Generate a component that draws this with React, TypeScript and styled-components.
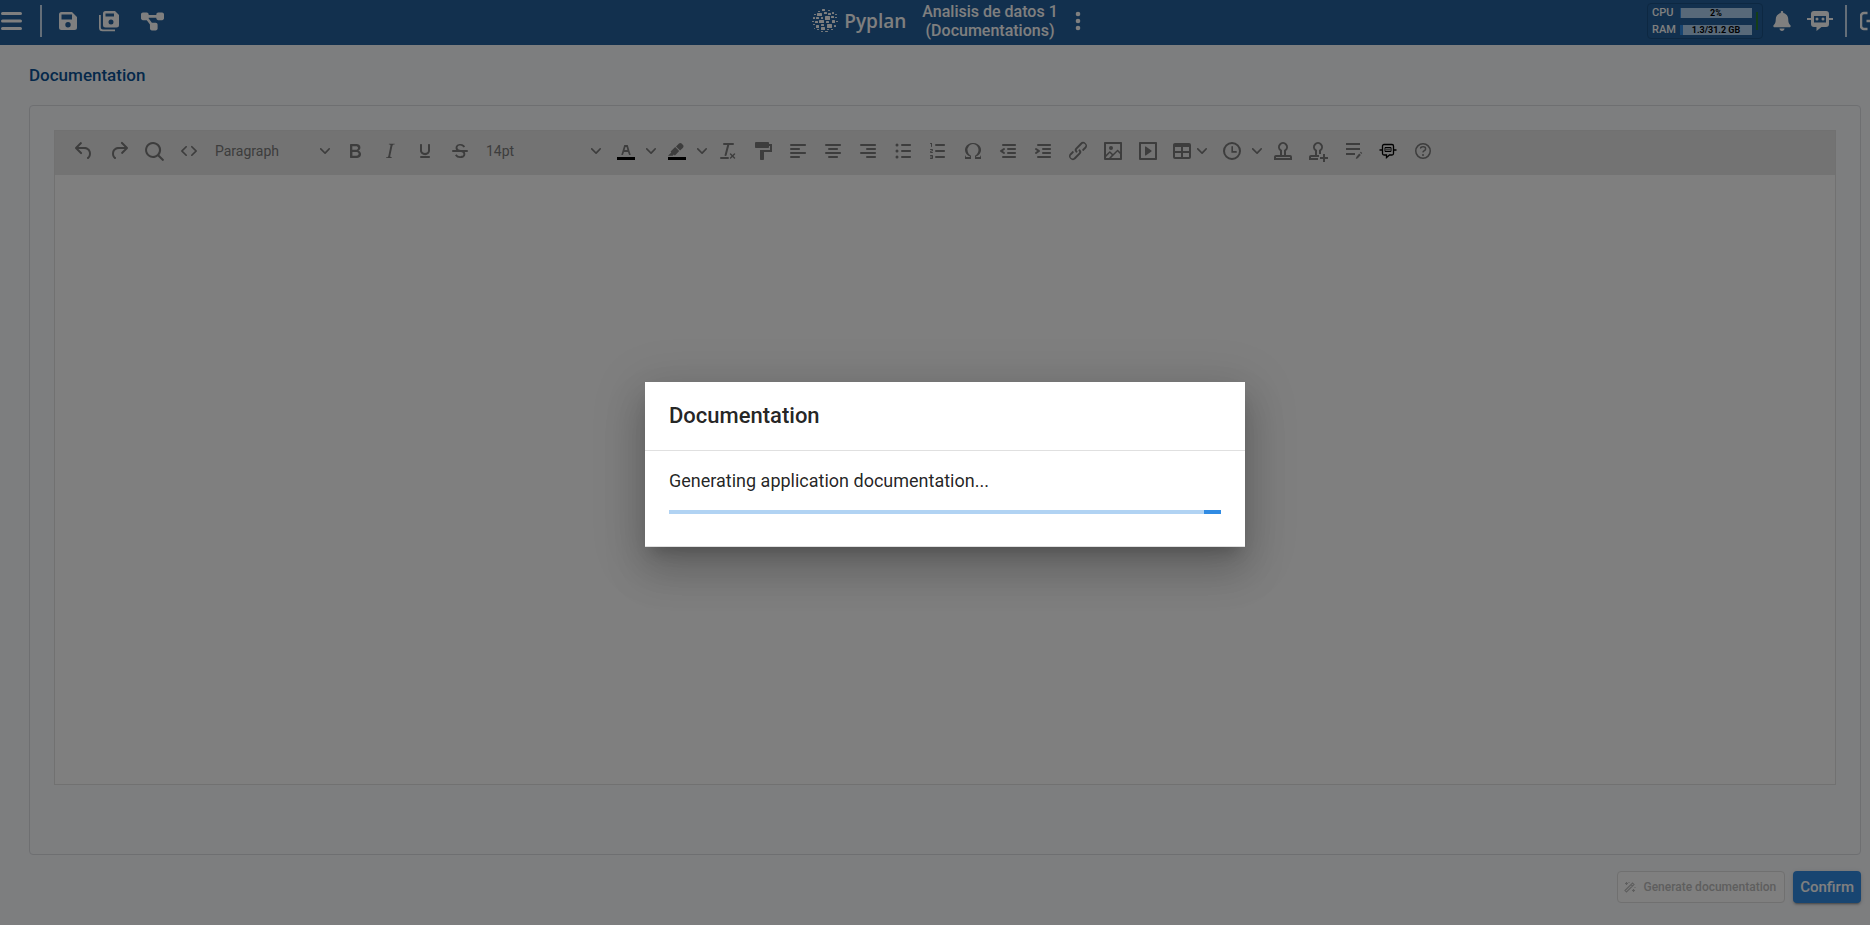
import React from 'react';
import styled, { createGlobalStyle } from 'styled-components';
import { FaBell } from 'react-icons/fa';
import { FaDiagramProject } from 'react-icons/fa6';

const GlobalStyle = createGlobalStyle`
  *, *::before, *::after { box-sizing: border-box; }
  html, body { margin: 0; overflow: hidden; }
  body { font-family: Roboto, "Liberation Sans", sans-serif; background: #fafcff; }
  button, select { font: inherit; color: inherit; margin: 0; padding: 0; border: 0; background: none; }
`;

/* The shell runs slightly past the window on the right and bottom. */
const Shell = styled.div`
  position: relative;
  display: flex;
  flex-direction: column;
  width: calc(100vw + 20px);
  min-height: calc(100vh + 4px);
  background: #fafcff;
`;

/* ---------- Header ---------- */

const Header = styled.header`
  display: grid;
  grid-template-columns: 1fr auto 1fr;
  align-items: center;
  height: 45px;
  padding-bottom: 3px;
  background: #24609c;
  color: #fff;
`;

const HeaderGroup = styled.div<{ $end?: boolean }>`
  display: flex;
  align-items: center;
  justify-content: ${p => (p.$end ? 'flex-end' : 'flex-start')};
`;

const HeaderButton = styled.button<{ $width?: number }>`
  display: flex;
  align-items: center;
  justify-content: center;
  width: ${p => p.$width ?? 42}px;
  height: 32px;
  flex: none;
  svg { display: block; }
`;

const HeaderRule = styled.span<{ $left: number; $right: number }>`
  width: 2px;
  height: 32px;
  margin-left: ${p => p.$left}px;
  margin-right: ${p => p.$right}px;
  background: #c8dcf0;
`;

const Brand = styled.div`
  display: flex;
  align-items: center;
  padding-left: 20px;
`;

const BrandName = styled.span`
  margin: 0 16px 0 6px;
  font: 600 19px/24px "Open Sans", sans-serif;
`;

const AppTitle = styled.h1`
  margin: 0;
  font-size: 16px;
  line-height: 19px;
  font-weight: 500;
  text-align: center;
`;

const Meters = styled.div`
  display: flex;
  align-items: center;
  gap: 4px;
  height: 36px;
  padding: 0 4px;
  margin-right: 1px;
  border: 1px solid #1b5084;
  border-radius: 4px;
`;

const MeterRows = styled.div`
  display: flex;
  flex-direction: column;
  gap: 3px;
`;

const MeterRow = styled.div`
  display: flex;
  align-items: center;
  gap: 5px;
  height: 14px;
`;

const MeterLabel = styled.span`
  width: 23px;
  font-size: 11px;
  line-height: 14px;
  font-weight: 500;
`;

const MeterTrack = styled.div<{ $value: number }>`
  width: 72px;
  height: 10px;
  background: linear-gradient(to right, #308be3 ${p => p.$value}%, #b1d3f3 ${p => p.$value}%);
  color: #000;
  font-size: 9px;
  line-height: 10px;
  font-weight: 700;
  text-align: center;
  white-space: nowrap;
`;

const Status = styled.span`
  width: 2px;
  height: 18px;
  background: #2a7d30;
`;

/* ---------- Page ---------- */

const Main = styled.main`
  flex: 1;
  display: flex;
  flex-direction: column;
  padding: 0 29px 26px;
`;

const PageTitle = styled.h2`
  margin: 0;
  font-size: 17px;
  line-height: 24px;
  font-weight: 500;
  padding: 18px 0;
  color: #0b5396;
`;

const Panel = styled.section`
  flex: 1;
  display: flex;
  flex-direction: column;
  padding: 24px 24px 69px;
  border: 1px solid #dcdee2;
  border-radius: 4px;
`;

const Editor = styled.div`
  flex: 1;
  display: flex;
  flex-direction: column;
  border: 1px solid #e2e2e2;
  background: #fff;
`;

const Toolbar = styled.div`
  display: flex;
  gap: 1px;
  padding: 6px 12px 10px;
  background: #e6e6e6;
  color: #7a7a7a;
`;

const ToolButton = styled.button<{ $width?: number }>`
  display: flex;
  align-items: center;
  justify-content: center;
  flex: none;
  width: ${p => p.$width ?? 34}px;
  height: 28px;
  svg { display: block; flex: none; }
`;

const MenuButton = styled(ToolButton)`
  justify-content: flex-start;
  gap: 3px;
  && { padding-left: 4px; }
`;

const SplitButton = styled.span`
  display: flex;
`;

const SelectBox = styled.label`
  display: grid;
  grid-template-columns: 1fr 24px;
  align-items: center;
  width: 130px;
  height: 28px;
  svg { grid-area: 1 / 2; justify-self: center; pointer-events: none; }
`;

const ToolSelect = styled.select`
  grid-area: 1 / 1 / 2 / 3;
  appearance: none;
  width: 100%;
  height: 28px;
  && {
    padding-left: 8px;
    font-size: 14px;
  }
`;

const EditArea = styled.div`
  flex: 1;
  outline: none;
`;

const Actions = styled.div`
  display: flex;
  justify-content: flex-end;
  gap: 8px;
  margin-top: 16px;
`;

const ActionButton = styled.button<{ $primary?: boolean }>`
  display: flex;
  align-items: center;
  justify-content: center;
  gap: 8px;
  height: 32px;
  border-radius: 4px;
  && {
    padding: ${p => (p.$primary ? '0 7px' : '0 8px 0 6px')};
    border: ${p => (p.$primary ? '0' : '1px solid #e0e0e0')};
    background: ${p => (p.$primary ? '#308be3' : '#fff')};
    color: ${p => (p.$primary ? '#fff' : '#bdbdbd')};
    font-size: ${p => (p.$primary ? 15 : 12)}px;
    font-weight: 500;
  }
  box-shadow: ${p =>
    p.$primary ? '0 3px 1px -2px rgba(0,0,0,.2), 0 2px 2px rgba(0,0,0,.14), 0 1px 5px rgba(0,0,0,.12)' : 'none'};
`;

/* ---------- Dialog ---------- */

const Backdrop = styled.div`
  position: absolute;
  inset: 0;
  display: flex;
  align-items: center;
  justify-content: center;
  background: rgba(0, 0, 0, 0.5);
`;

const Dialog = styled.div`
  width: 600px;
  max-width: 100%;
  background: #fff;
  color: rgba(0, 0, 0, 0.87);
  box-shadow: 0 11px 15px -7px rgba(0, 0, 0, 0.2), 0 24px 38px 3px rgba(0, 0, 0, 0.14),
    0 9px 46px 8px rgba(0, 0, 0, 0.12);
`;

const DialogTitle = styled.h2`
  margin: 0;
  padding: 16px 24px;
  font-size: 22px;
  line-height: 36px;
  font-weight: 500;
`;

const DialogBody = styled.div`
  padding: 16px 24px 32px;
  border: solid #e0e0e0;
  border-width: 1px 0;
`;

const Message = styled.p`
  margin: 0 0 16px;
  font-size: 18px;
  line-height: 27px;
`;

const ProgressTrack = styled.div`
  display: flex;
  justify-content: flex-end;
  height: 4px;
  background: #b1d3f3;
`;

const ProgressBar = styled.div`
  width: 3%;
  background: #308be3;
`;

/* ---------- Icons ---------- */

const Svg = ({ size = 24, children }: { size?: number; children: React.ReactNode }) => (
  <svg width={size} height={size} viewBox={`0 0 ${size} ${size}`} fill="currentColor" fillRule="evenodd" aria-hidden="true">
    {children}
  </svg>
);

const Chevron = () => (
  <Svg size={10}>
    <path d="M8.7 2.2c.3-.3.8-.3 1 0 .4.4.4.9 0 1.2L5.7 7.8c-.3.3-.9.3-1.2 0L.2 3.4a.8.8 0 0 1 0-1.2c.3-.3.8-.3 1.1 0L5 6l3.7-3.8Z" />
  </Svg>
);

const bar = (x: number, y: number, w: number) =>
  `M${x} ${y}h${w}c.6 0 1 .4 1 1s-.4 1-1 1h-${w}a1 1 0 1 1 0-2Z`;

const icons: Record<string, string> = {
  Undo: 'M6.4 8H12c3.7 0 6.2 2 6.8 5.1.6 2.7-.4 5.6-2.3 6.8a1 1 0 0 1-1-1.8c1.1-.6 1.8-2.7 1.4-4.6-.5-2.1-2.1-3.5-4.9-3.5H6.4l3.3 3.3a1 1 0 1 1-1.4 1.4l-5-5a1 1 0 0 1 0-1.4l5-5a1 1 0 0 1 1.4 1.4L6.4 8Z',
  Redo: 'M17.6 10H12c-2.8 0-4.4 1.4-4.9 3.5-.4 2 .3 4 1.4 4.6a1 1 0 1 1-1 1.8c-2-1.2-2.9-4.1-2.3-6.8.6-3 3-5.1 6.8-5.1h5.6l-3.3-3.3a1 1 0 1 1 1.4-1.4l5 5a1 1 0 0 1 0 1.4l-5 5a1 1 0 0 1-1.4-1.4l3.3-3.3Z',
  'Find and replace': 'M16 17.3a8 8 0 1 1 1.4-1.4l4.3 4.4a1 1 0 0 1-1.4 1.4l-4.4-4.3Zm-5-.3a6 6 0 1 0 0-12 6 6 0 0 0 0 12Z',
  'Source code': 'M9.8 15.7c.3.3.3.8 0 1-.3.4-.9.4-1.2 0l-4.4-4.1a.8.8 0 0 1 0-1.2l4.4-4.2c.3-.3.9-.3 1.2 0 .3.3.3.8 0 1.1L6 12l3.8 3.7ZM14.2 15.7c-.3.3-.3.8 0 1 .4.4.9.4 1.2 0l4.4-4.1c.3-.3.3-.9 0-1.2l-4.4-4.2a.8.8 0 0 0-1.2 0c-.3.3-.3.8 0 1.1L18 12l-3.8 3.7Z',
  Bold: 'M7.8 19c-.3 0-.5 0-.6-.2l-.2-.5V5.7c0-.2 0-.4.2-.5l.6-.2h5c1.5 0 2.7.3 3.5 1 .7.6 1.1 1.4 1.1 2.5a3 3 0 0 1-.6 1.9c-.4.6-1 1-1.6 1.2.4.1.9.3 1.3.6s.8.7 1 1.2c.4.4.5 1 .5 1.6 0 1.3-.4 2.3-1.3 3-.8.7-2.1 1-3.8 1H7.8Zm5-8.3c.6 0 1.2-.1 1.6-.5.4-.3.6-.7.6-1.3 0-1.1-.8-1.7-2.3-1.7H9.3v3.5h3.4Zm.5 6c.7 0 1.3-.1 1.7-.4.4-.4.6-.9.6-1.5s-.2-1-.7-1.4c-.4-.3-1-.4-2-.4H9.4v3.8h4Z',
  Italic: 'm16.7 4.7-.1.9h-.3c-.6 0-1 0-1.4.3-.3.3-.4.6-.5 1.1l-2.1 9.8v.6c0 .5.4.8 1.4.8h.2l-.2.8H8l.2-.8h.2c1.1 0 1.8-.5 2-1.5l2-9.8.1-.5c0-.6-.4-.8-1.4-.8h-.3l.2-.9h5.8Z',
  Underline: 'M16 5c.6 0 1 .4 1 1v5.5a4 4 0 0 1-.4 1.8l-1 1.4a5.3 5.3 0 0 1-5.5 1 5 5 0 0 1-1.6-1c-.5-.4-.8-.9-1.1-1.4a4 4 0 0 1-.4-1.8V6c0-.6.4-1 1-1s1 .4 1 1v5.5c0 .3 0 .6.2 1l.6.7a3.3 3.3 0 0 0 2.2.8 3.4 3.4 0 0 0 2.2-.8c.3-.2.4-.5.6-.8l.2-.9V6c0-.6.4-1 1-1ZM8 17h8c.6 0 1 .4 1 1s-.4 1-1 1H8a1 1 0 0 1 0-2Z',
  'Clear formatting': 'M13.2 6a1 1 0 0 1 0 .2l-2.6 10a1 1 0 0 1-1 .8h-.2a.8.8 0 0 1-.8-1l2.6-10H8a1 1 0 1 1 0-2h9a1 1 0 0 1 0 2h-3.8ZM5 18h7a1 1 0 0 1 0 2H5a1 1 0 0 1 0-2Zm13 1.5L16.5 18 15 19.5a.7.7 0 0 1-1-1l1.5-1.5-1.5-1.5a.7.7 0 0 1 1-1l1.5 1.5 1.5-1.5a.7.7 0 0 1 1 1L17.5 17l1.5 1.5a.7.7 0 0 1-1 1Z',
  'Format painter': 'M18 5V4c0-.5-.4-1-1-1H5a1 1 0 0 0-1 1v4c0 .6.5 1 1 1h12c.6 0 1-.4 1-1V7h1v4H9v9c0 .6.4 1 1 1h2c.6 0 1-.4 1-1v-7h8V5h-3Z',
  'Align left': bar(5, 5, 14) + bar(5, 9, 8) + bar(5, 13, 14) + bar(5, 17, 8),
  'Align center': bar(5, 5, 14) + bar(8, 9, 8) + bar(5, 13, 14) + bar(8, 17, 8),
  'Align right': bar(5, 5, 14) + bar(11, 9, 8) + bar(5, 13, 14) + bar(11, 17, 8),
  'Bullet list': bar(11, 5, 8) + bar(11, 11, 8) + bar(11, 17, 8) +
    'M4.5 6a1.5 1.5 0 1 1 3 0 1.5 1.5 0 0 1-3 0ZM4.5 12a1.5 1.5 0 1 1 3 0 1.5 1.5 0 0 1-3 0ZM4.5 18a1.5 1.5 0 1 1 3 0 1.5 1.5 0 0 1-3 0Z',
  'Numbered list': bar(10, 5, 8) + bar(10, 11, 8) + bar(10, 17, 8) +
    'M6 4v3.5c0 .3-.2.5-.5.5a.5.5 0 0 1-.5-.5V5h-.5a.5.5 0 0 1 0-1H6Zm-1 8.8.2.2h1.3c.3 0 .5.2.5.5s-.2.5-.5.5H4.9a1 1 0 0 1-.9-1V13c0-.4.3-.8.6-1l1.2-.4.2-.3a.2.2 0 0 0-.2-.2H4.5a.5.5 0 0 1-.5-.5c0-.3.2-.5.5-.5h1.6c.5 0 .9.4.9 1v.1c0 .4-.3.8-.6 1l-1.2.4-.2.3ZM7 17v2c0 .6-.4 1-1 1H4.5a.5.5 0 0 1 0-1h1.2c.2 0 .3-.1.3-.3 0-.2-.1-.3-.3-.3H4.4a.4.4 0 1 1 0-.8h1.3c.2 0 .3-.1.3-.3 0-.2-.1-.3-.3-.3H4.5a.5.5 0 1 1 0-1H6c.6 0 1 .4 1 1Z',
  'Special character': 'M15 18h4l1-2v4h-6v-3.3l1.4-1a6 6 0 0 0 1.8-2.9 6.3 6.3 0 0 0-.1-4.1 5.8 5.8 0 0 0-3-3.2c-.6-.3-1.3-.5-2.1-.5a5.1 5.1 0 0 0-3.9 1.8 6.3 6.3 0 0 0-1.3 6 6.2 6.2 0 0 0 1.8 3l1.4.9V20H4v-4l1 2h4v-.5l-2-1L5.4 15A6.5 6.5 0 0 1 4 11c0-1 .2-1.9.6-2.7A7 7 0 0 1 7.4 5.2 8 8 0 0 1 12 4a8 8 0 0 1 4.6 1.2 7 7 0 0 1 2.8 3.1c.4.8.6 1.7.6 2.7 0 1.5-.5 2.8-1.4 4L17 16.5l-2 1v.5Z',
  'Decrease indent': bar(7, 5, 12) + bar(12, 9, 7) + bar(12, 13, 7) + bar(7, 17, 12) +
    'M8.6 13.2a1 1 0 0 1-1.2 1.6l-3-2a1 1 0 0 1 0-1.6l3-2a1 1 0 0 1 1.2 1.6L6.8 12l1.8 1.2Z',
  'Increase indent': bar(7, 5, 12) + bar(12, 9, 7) + bar(12, 13, 7) + bar(7, 17, 12) +
    'M4.4 13.2 6.2 12l-1.8-1.2a1 1 0 0 1 1.2-1.6l3 2a1 1 0 0 1 0 1.6l-3 2a1 1 0 1 1-1.2-1.6Z',
  'Insert link': 'M6.2 12.3a1 1 0 0 1 1.4 1.4l-2 2a2 2 0 1 0 2.6 2.8l4.8-4.8a1 1 0 0 0 0-1.4 1 1 0 1 1 1.4-1.3 2.9 2.9 0 0 1 0 4L9.6 20a3.9 3.9 0 0 1-5.5-5.5l2-2Zm11.6-.6a1 1 0 0 1-1.4-1.4l2-2a2 2 0 1 0-2.6-2.8L11 10.3a1 1 0 0 0 0 1.4A1 1 0 1 1 9.6 13a2.9 2.9 0 0 1 0-4L14.4 4a3.9 3.9 0 0 1 5.5 5.5l-2 2Z',
  'Insert image': 'm5 15.7 3.3-3.2c.3-.3.7-.3 1 0L12 15l4.1-4c.3-.4.8-.4 1 0l2 1.9V5H5v10.7ZM5 18V19h3l2.8-2.9-2-2L5 17.9Zm14-3-2.5-2.4-6.4 6.5H19v-4ZM4 3h16c.6 0 1 .4 1 1v16c0 .6-.4 1-1 1H4a1 1 0 0 1-1-1V4c0-.6.4-1 1-1Zm6 8a2 2 0 1 0 0-4 2 2 0 0 0 0 4Z',
  'Insert media': 'M4 3h16c.6 0 1 .4 1 1v16c0 .6-.4 1-1 1H4a1 1 0 0 1-1-1V4c0-.6.4-1 1-1Zm1 2v14h14V5H5Zm4.8 2.6 5.6 4a.5.5 0 0 1 0 .8l-5.6 4A.5.5 0 0 1 9 16V8a.5.5 0 0 1 .8-.4Z',
  Table: 'M19 4a2 2 0 0 1 2 2v12a2 2 0 0 1-2 2H5a2 2 0 0 1-2-2V6c0-1.1.9-2 2-2h14ZM5 14v4h6v-4H5Zm14 0h-6v4h6v-4Zm0-6h-6v4h6V8ZM5 12h6V8H5v4Z',
  'Insert date': 'M12 19a7 7 0 1 0 0-14 7 7 0 0 0 0 14Zm0 2a9 9 0 1 1 0-18 9 9 0 0 1 0 18ZM16 12h-3V7.8a.8.8 0 0 0-1.6 0v6H16a.9.9 0 0 0 0-1.8Z',
  'Insert template': 'M19 19v-1H5v1h14ZM9 16v-4a5 5 0 1 1 6 0v4h4a2 2 0 0 1 2 2v3H3v-3c0-1.1.9-2 2-2h4Zm4 0v-5l.8-.6a3 3 0 1 0-3.6 0l.8.6v5h2Z',
  'Add template': 'M9 12a5 5 0 1 1 6 0v3h-2v-4l.8-.6a3 3 0 1 0-3.6 0l.8.6v5h2v2H5v1h7v2H3v-3c0-1.1.9-2 2-2h4v-4ZM17 15h2v3h3v2h-3v3h-2v-3h-3v-2h3v-3Z',
  Footnotes: 'M5 4h14v2H5zM5 9h14v2H5zM5 14h9v2H5zM18.2 14.500l1.600 1.400-3 3.400-2 .8.5-2.200zM19 13.500l.8-.7 1.400 1.300-.8.9z',
};

const Tool = ({ name }: { name: string }) => (
  <ToolButton type="button" aria-label={name}>
    <Svg><path d={icons[name]} /></Svg>
  </ToolButton>
);

const TextStrike = () => (
  <ToolButton type="button" aria-label="Strikethrough">
    <Svg>
      <path d="M15.6 8.5c-.5-.7-1-1.1-1.3-1.3-.6-.4-1.3-.6-2-.6-2.7 0-2.8 1.7-2.8 2.1 0 1.6 1.8 2 3.2 2.3 4.4.9 4.6 2.8 4.6 3.9 0 1.4-.7 4.1-5 4.1A6.2 6.2 0 0 1 7 16.4l1.5-1.1c.4.6 1.6 2 3.7 2 1.6 0 2.5-.4 3-1.2.4-.8.3-2-.8-2.6-.7-.4-1.6-.7-2.9-1-1-.2-3.9-.8-3.9-3.6C7.6 6 10.3 5 12.4 5c2.9 0 4.2 1.6 4.7 2.4l-1.5 1.1Z" />
      <path d="M5 11h14a1 1 0 0 1 0 2H5a1 1 0 0 1 0-2Z" />
    </Svg>
  </ToolButton>
);

const Split = ({ name, children }: { name: string; children: React.ReactNode }) => (
  <SplitButton>
    <ToolButton type="button" aria-label={name}><Svg>{children}</Svg></ToolButton>
    <ToolButton type="button" aria-label={`${name} menu`} $width={16}><Chevron /></ToolButton>
  </SplitButton>
);

const DropDown = ({ name, value }: { name: string; value: string }) => (
  <SelectBox>
    <ToolSelect aria-label={name} defaultValue={value}><option>{value}</option></ToolSelect>
    <Chevron />
  </SelectBox>
);

const ChatBot = () => (
  <svg width="26" height="22" viewBox="0 0 26 22" fill="currentColor" fillRule="evenodd" aria-hidden="true">
    <path d="M7 1h12a3 3 0 0 1 3 3v10a3 3 0 0 1-3 3h-4.500L9.500 21v-4H7a3 3 0 0 1-3-3V4a3 3 0 0 1 3-3ZM7 6v6.500h12V6ZM0 8h4v2H0zM22 8h4v2h-4z" />
    <circle cx="10" cy="9" r="1.500" /><circle cx="16" cy="9" r="1.500" />
  </svg>
);

const BotOutline = () => (
  <svg width="18" height="16" viewBox="0 0 18 16" fill="none" stroke="#000" aria-hidden="true">
    <path d="M5 1.500h8a1.500 1.500 0 0 1 1.500 1.500v7.500a1.500 1.500 0 0 1-1.500 1.500h-2.500L7.500 14.500V12H5a1.500 1.500 0 0 1-1.500-1.500V3A1.500 1.500 0 0 1 5 1.500Z" strokeWidth="1.300" />
    <path d="M.5 7H3M15 7h2.500" strokeWidth="1.300" />
    <path d="M6 4.500h6v4H6zM8 5.500v2M10 5.500v2" />
  </svg>
);

const logoTiles: [number, number, number, number][] = [
  [10, 0, 3, 2], [16, 1, 2, 1], [6, 2, 2, 1], [20, 3, 2, 2], [12, 3, 3, 2], [5, 4, 5, 3], [16, 4, 3, 2], [2, 5, 2, 1],
  [23, 5, 2, 1], [19, 7, 3, 2], [13, 7, 5, 4], [1, 8, 2, 2], [4, 8, 3, 2], [9, 8, 2, 2], [23, 8, 2, 1], [3, 12, 3, 2],
  [7, 11, 5, 3], [20, 11, 3, 3], [0, 12, 2, 1], [24, 12, 2, 1], [14, 12, 3, 2], [15, 15, 5, 4], [1, 15, 2, 1],
  [4, 16, 3, 3], [9, 15, 3, 2], [22, 16, 2, 2], [9, 18, 4, 3], [2, 19, 1, 1], [5, 20, 2, 1], [15, 20, 2, 1],
  [19, 20, 2, 1], [9, 22, 2, 1], [13, 22, 3, 1],
];

const Logo = () => (
  <svg width="26" height="24" viewBox="0 0 26 24" fill="currentColor" aria-hidden="true">
    {logoTiles.map(([x, y, w, h]) => <rect key={`${x}-${y}`} x={x} y={y} width={w} height={h} rx=".5" />)}
  </svg>
);

const Wand = () => (
  <svg width="12" height="12" viewBox="0 0 12 12" fill="none" stroke="currentColor" aria-hidden="true">
    <path d="m1 9.500 7.500-7.500 1.500 1.500L2.500 11ZM7 3.500 8.500 5M2.500 1v3M1 2.500h3M9.500 8v3M8 9.500h3" strokeWidth="1.200" />
    <path d="M5 1v1M11 6v1" />
  </svg>
);

const meters = [
  { label: 'CPU', text: '2%', value: 2 },
  { label: 'RAM', text: '1.3/31.2 GB', value: 4 },
];

export default function App() {
  return (
    <Shell>
      <GlobalStyle />
      <Header>
        <HeaderGroup>
          <HeaderButton type="button" aria-label="Menu" $width={23}>
            <svg width="23" height="20" viewBox="0 0 23 20" stroke="currentColor" strokeWidth="3" strokeLinecap="round">
              <path d="M2.500 2.500h18M2.500 10h18M2.500 17.500h18" />
            </svg>
          </HeaderButton>
          <HeaderRule $left={17} $right={5} />
          <HeaderButton type="button" aria-label="Save">
            <Svg>
              <path d="M5.500 3H16l5 5v10.500a2.500 2.500 0 0 1-2.500 2.500h-13A2.500 2.500 0 0 1 3 18.500v-13A2.500 2.500 0 0 1 5.500 3ZM5.500 5.500v5H16v-5ZM12 13a2.700 2.700 0 1 0 0 5.400 2.700 2.700 0 0 0 0-5.400Z" />
            </Svg>
          </HeaderButton>
          <HeaderButton type="button" aria-label="Save all">
            <Svg>
              <path d="M7.500 2H17l4 4v10a2.500 2.500 0 0 1-2.500 2.500h-11A2.500 2.500 0 0 1 5 16V4.500A2.500 2.500 0 0 1 7.500 2ZM7.500 4.500v3H16v-3ZM13 10.500a2.500 2.500 0 1 0 0 5 2.500 2.500 0 0 0 0-5Z" />
              <path d="M1 6h1.800v12.500a2 2 0 0 0 2 2H17v1.700H4.500A3.500 3.500 0 0 1 1 18.700Z" />
            </Svg>
          </HeaderButton>
          <HeaderButton type="button" aria-label="Diagram"><FaDiagramProject size={23} /></HeaderButton>
        </HeaderGroup>
        <Brand>
          <Logo />
          <BrandName>Pyplan</BrandName>
          <AppTitle>Analisis de datos 1<br />(Documentations)</AppTitle>
          <HeaderButton type="button" aria-label="More options" $width={40}>
            <Svg>
              <circle cx="12" cy="5" r="2.300" /><circle cx="12" cy="12" r="2.300" /><circle cx="12" cy="19" r="2.300" />
            </Svg>
          </HeaderButton>
        </Brand>
        <HeaderGroup $end>
          <Meters>
            <MeterRows>
              {meters.map(m => (
                <MeterRow key={m.label}>
                  <MeterLabel>{m.label}</MeterLabel>
                  <MeterTrack $value={m.value}>{m.text}</MeterTrack>
                </MeterRow>
              ))}
            </MeterRows>
            <Status />
          </Meters>
          <HeaderButton type="button" aria-label="Notifications" $width={36}><FaBell size={20} /></HeaderButton>
          <HeaderButton type="button" aria-label="Assistant" $width={40}><ChatBot /></HeaderButton>
          <HeaderRule $left={5} $right={11} />
          <HeaderButton type="button" aria-label="Log out" $width={32}>
            <svg width="28" height="20" viewBox="0 0 28 20" fill="none" stroke="currentColor" strokeWidth="2.500">
              <path d="M7.500 2H4a3 3 0 0 0-3 3v10a3 3 0 0 0 3 3h3.500M6.500 10H22M16 4l6 6-6 6" />
            </svg>
          </HeaderButton>
        </HeaderGroup>
      </Header>

      <Main>
        <PageTitle>Documentation</PageTitle>
        <Panel>
          <Editor>
            <Toolbar role="toolbar" aria-label="Formatting">
              <Tool name="Undo" />
              <Tool name="Redo" />
              <Tool name="Find and replace" />
              <Tool name="Source code" />
              <DropDown name="Block format" value="Paragraph" />
              <Tool name="Bold" />
              <Tool name="Italic" />
              <Tool name="Underline" />
              <TextStrike />
              <DropDown name="Font size" value="14pt" />
              <Split name="Text color">
                <path d="M3 18h18v3H3z" fill="#000" />
                <path d="M8.700 16h-.8a.5.5 0 0 1-.5-.6l2.700-9c.1-.3.3-.4.5-.4h2.800c.2 0 .4.1.5.4l2.700 9a.5.5 0 0 1-.5.6h-.8a.5.5 0 0 1-.4-.4l-.7-2.200c0-.3-.3-.4-.5-.4h-3.400c-.2 0-.4.1-.5.4l-.7 2.200c0 .3-.2.4-.4.4Zm2.600-7.600-.6 2a.5.5 0 0 0 .5.6h1.600a.5.5 0 0 0 .5-.6l-.6-2c0-.3-.3-.4-.5-.4h-.4c-.2 0-.4.1-.5.4Z" />
              </Split>
              <Split name="Background color">
                <path d="M3 18h18v3H3z" fill="#000" />
                <path d="M7.700 16.700H3l3.300-3.300-.7-.8L10.200 8l4 4.100-4 4.200c-.2.2-.6.2-.8 0l-.6-.7-1.100 1.100Zm5-7.500L11 7.400l3-2.900a2 2 0 0 1 2.600 0L18 6c.7.7.7 2 0 2.700l-2.900 2.900-1.800-1.800-.6-.6Z" />
              </Split>
              <Tool name="Clear formatting" />
              <Tool name="Format painter" />
              <Tool name="Align left" />
              <Tool name="Align center" />
              <Tool name="Align right" />
              <Tool name="Bullet list" />
              <Tool name="Numbered list" />
              <Tool name="Special character" />
              <Tool name="Decrease indent" />
              <Tool name="Increase indent" />
              <Tool name="Insert link" />
              <Tool name="Insert image" />
              <Tool name="Insert media" />
              <MenuButton type="button" aria-label="Table" $width={48}>
                <Svg><path d={icons.Table} /></Svg>
                <Chevron />
              </MenuButton>
              <Split name="Insert date"><path d={icons['Insert date']} /></Split>
              <Tool name="Insert template" />
              <Tool name="Add template" />
              <Tool name="Footnotes" />
              <ToolButton type="button" aria-label="Assistant"><BotOutline /></ToolButton>
              <ToolButton type="button" aria-label="Help">
                <Svg>
                  <path d="M12 5.500a6.500 6.500 0 1 0 0 13 6.500 6.500 0 0 0 0-13ZM12 4a8 8 0 1 1 0 16 8 8 0 0 1 0-16Z" />
                  <path d="M9.600 9.700a.7.700 0 0 1-.7-.8c0-1.100 1.500-1.800 3.200-1.800 1.800 0 3.200.8 3.200 2.400 0 1.400-.4 2.100-1.500 2.800-.2 0-.3.1-.3.2a2 2 0 0 0-.8.8.8.8 0 0 1-1.400-.6c.3-.7.8-1 1.300-1.500l.4-.2c.7-.4.8-.6.8-1.500 0-.5-.6-.9-1.700-.9-.5 0-1 .1-1.400.3-.2 0-.3.1-.3.2 0 .2-.4.6-.8.6Z" />
                  <circle cx="12" cy="16" r="1" />
                </Svg>
              </ToolButton>
            </Toolbar>
            <EditArea role="textbox" aria-label="Document" aria-multiline="true" />
          </Editor>
        </Panel>
        <Actions>
          <ActionButton type="button" disabled><Wand />Generate documentation</ActionButton>
          <ActionButton type="button" $primary>Confirm</ActionButton>
        </Actions>
      </Main>

      <Backdrop>
        <Dialog role="dialog" aria-modal="true" aria-labelledby="dialog-title">
          <DialogTitle id="dialog-title">Documentation</DialogTitle>
          <DialogBody>
            <Message>Generating application documentation...</Message>
            <ProgressTrack role="progressbar" aria-label="Generating documentation"><ProgressBar /></ProgressTrack>
          </DialogBody>
        </Dialog>
      </Backdrop>
    </Shell>
  );
}
